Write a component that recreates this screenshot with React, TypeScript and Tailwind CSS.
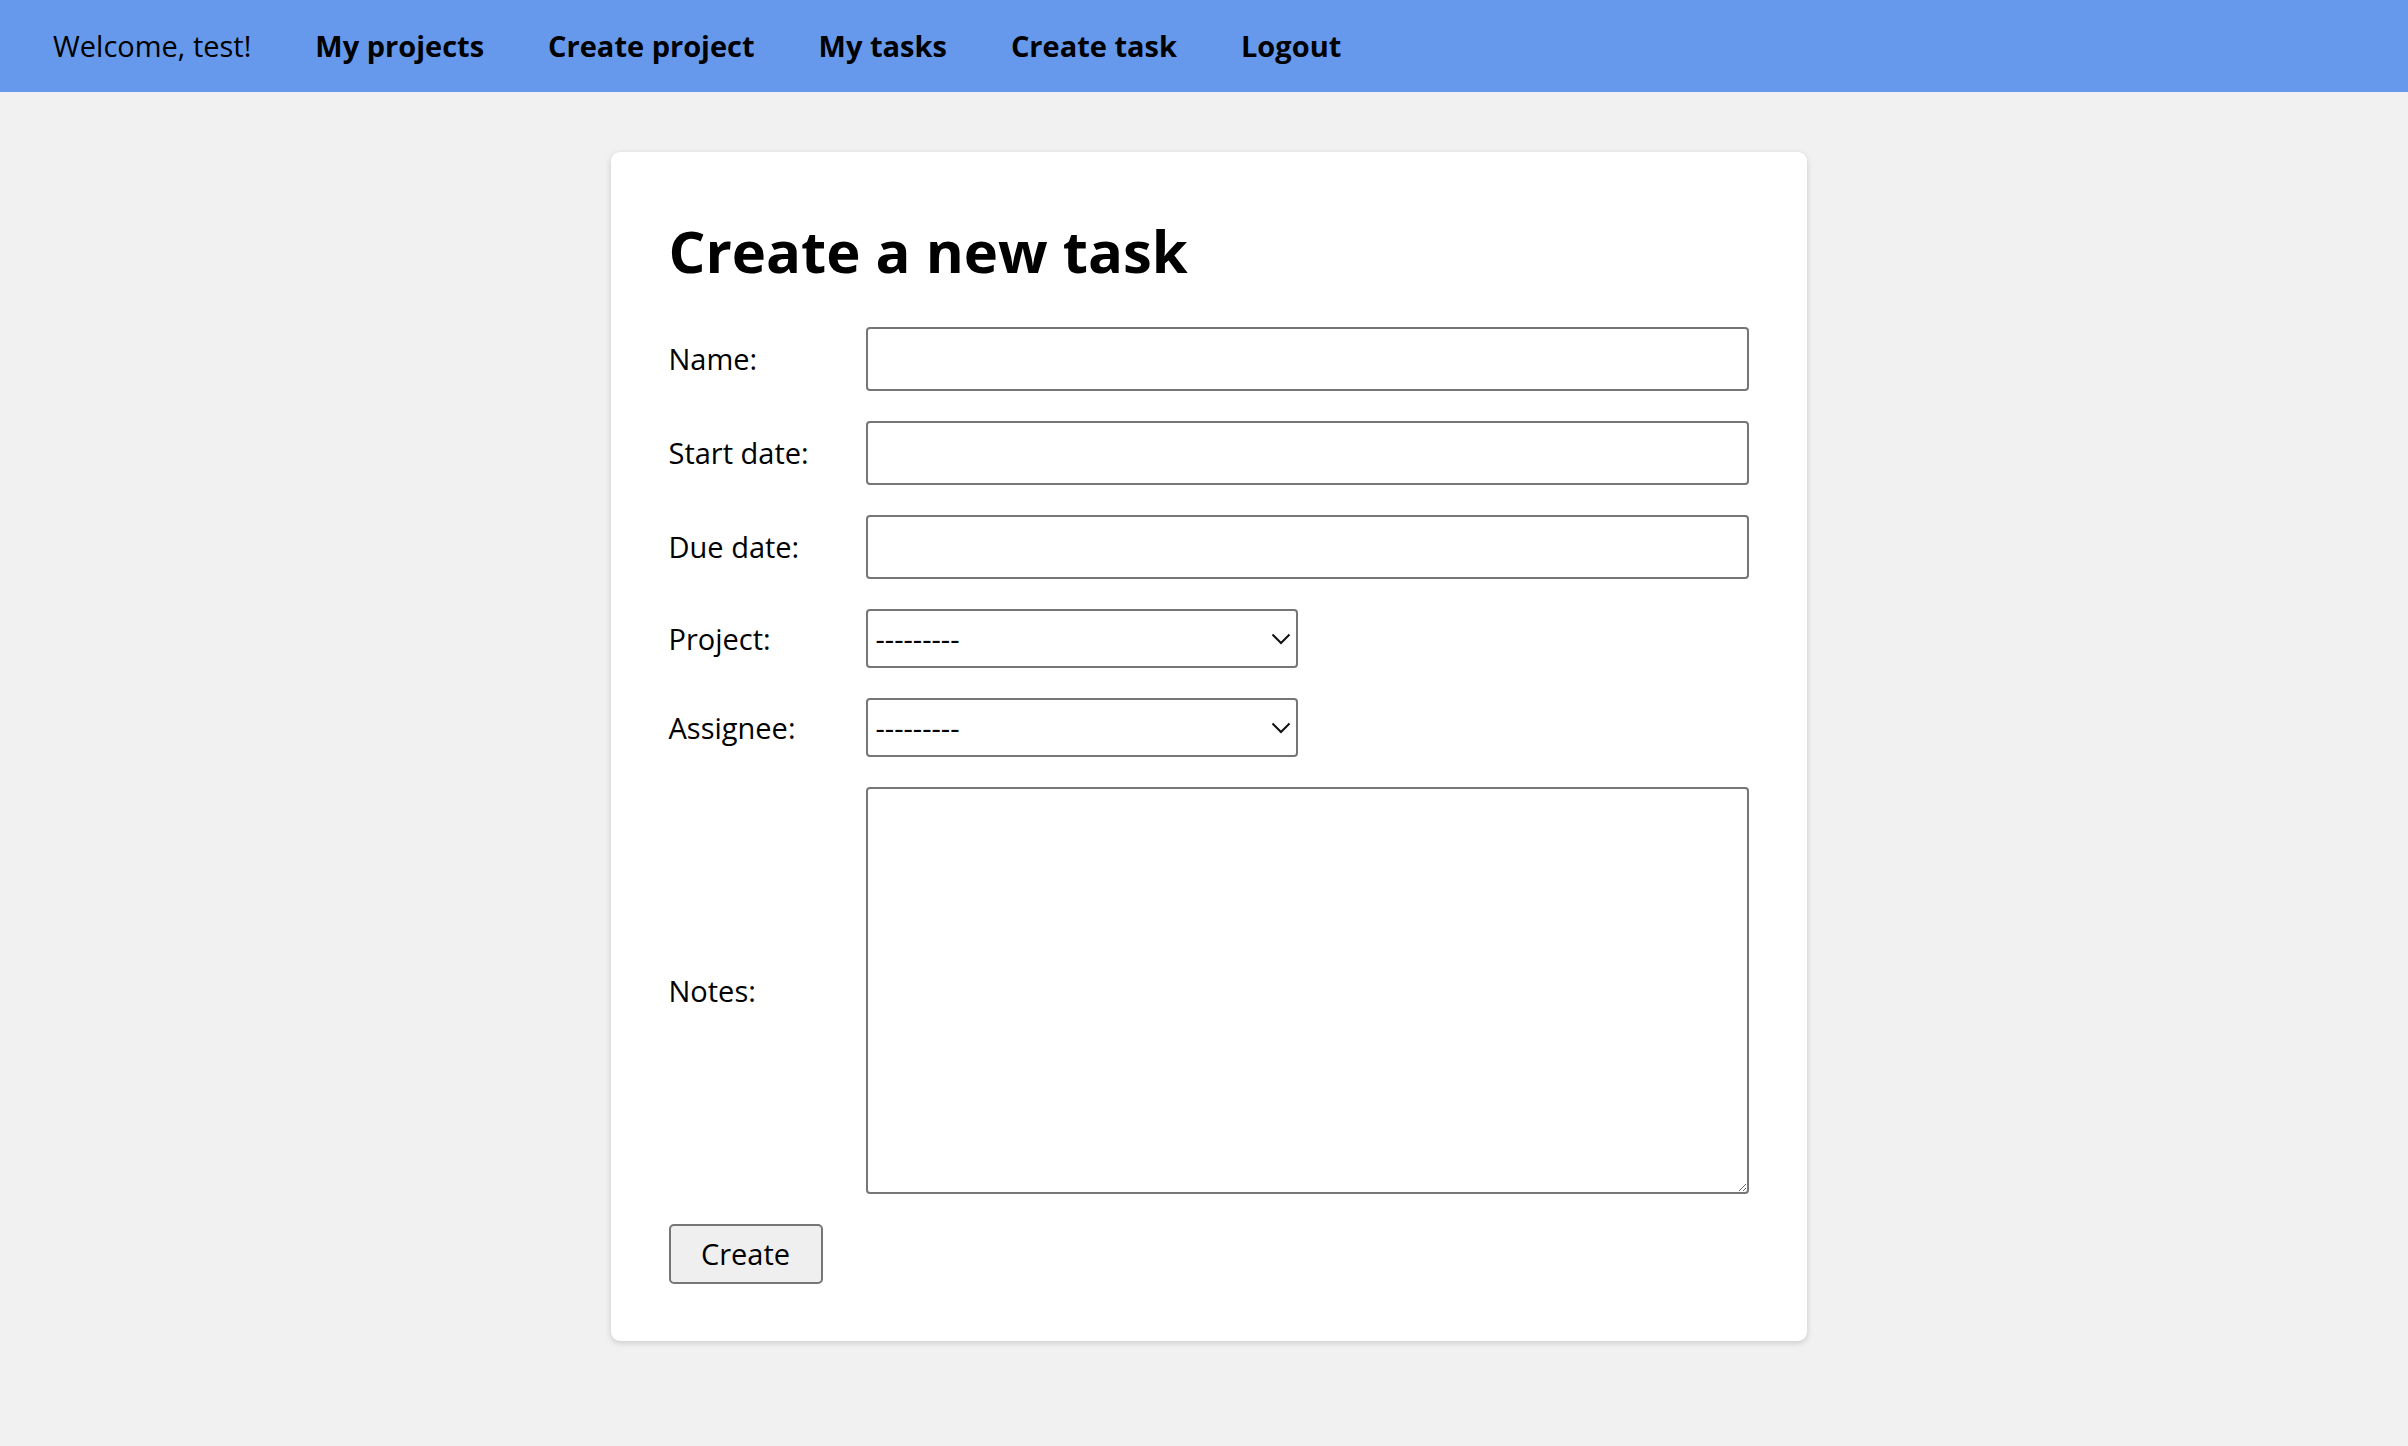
import { useState } from 'react'

const navLinks = ['My projects', 'Create project', 'My tasks', 'Create task', 'Logout']

function Chevron() {
  return (
    <svg width="20" height="12" viewBox="0 0 20 12" fill="none" className="pointer-events-none absolute right-[7px] top-1/2 -translate-y-1/2">
      <path d="M1.5 1.5 L10 10 L18.5 1.5" stroke="#111" strokeWidth="2" />
    </svg>
  )
}

function SelectBox({ value, onChange }: { value: string; onChange: (v: string) => void }) {
  return (
    <div className="relative w-[432px]">
      <select
        value={value}
        onChange={(e) => onChange(e.target.value)}
        className="block h-[59px] w-full appearance-none rounded-[4px] border-2 border-[#767676] bg-white pl-[8px] pr-10 text-[29px] text-black outline-none"
      >
        <option value="">---------</option>
      </select>
      <Chevron />
    </div>
  )
}

export default function App() {
  const [project, setProject] = useState('')
  const [assignee, setAssignee] = useState('')

  const inputCls = 'block h-[64px] w-full rounded-[4px] border-2 border-[#767676] bg-white px-2 text-[29px] outline-none'
  const labelCls = 'w-[197px] shrink-0 text-[29px] text-black'

  return (
    <div className="min-h-[1446px] bg-[#f1f1f1] font-['Open_Sans',sans-serif] text-black">
      <nav className="flex h-[92px] items-center gap-[64px] bg-[#6698eb] pl-[53px] text-[29px]">
        <span>Welcome, test!</span>
        {navLinks.map((l) => (
          <a key={l} href="#" className="font-bold text-black">
            {l}
          </a>
        ))}
      </nav>

      <main className="flex justify-center pl-[9px] pt-[60px]">
        <div className="w-[1196px] rounded-[9px] bg-white px-[58px] pb-[57px] pt-[60px] shadow-[0_2px_6px_rgba(0,0,0,0.16)]">
          <h1 className="mb-[37px] text-[58px] font-bold leading-[78px]">Create a new task</h1>

          <form className="flex flex-col gap-[30px]" onSubmit={(e) => e.preventDefault()}>
            <div className="flex items-center">
              <label className={labelCls}>Name:</label>
              <input type="text" className={inputCls} />
            </div>
            <div className="flex items-center">
              <label className={labelCls}>Start date:</label>
              <input type="text" className={inputCls} />
            </div>
            <div className="flex items-center">
              <label className={labelCls}>Due date:</label>
              <input type="text" className={inputCls} />
            </div>
            <div className="flex items-center">
              <label className={labelCls}>Project:</label>
              <SelectBox value={project} onChange={setProject} />
            </div>
            <div className="flex items-center">
              <label className={labelCls}>Assignee:</label>
              <SelectBox value={assignee} onChange={setAssignee} />
            </div>
            <div className="flex items-center">
              <label className={labelCls}>Notes:</label>
              <textarea className="block h-[407px] w-full rounded-[4px] border-2 border-[#767676] bg-white p-2 text-[29px] outline-none" />
            </div>
            <div>
              <button
                type="submit"
                className="h-[60px] w-[154px] rounded-[5px] border-2 border-[#767676] bg-[#efefef] text-[29px] text-black"
              >
                Create
              </button>
            </div>
          </form>
        </div>
      </main>
    </div>
  )
}
